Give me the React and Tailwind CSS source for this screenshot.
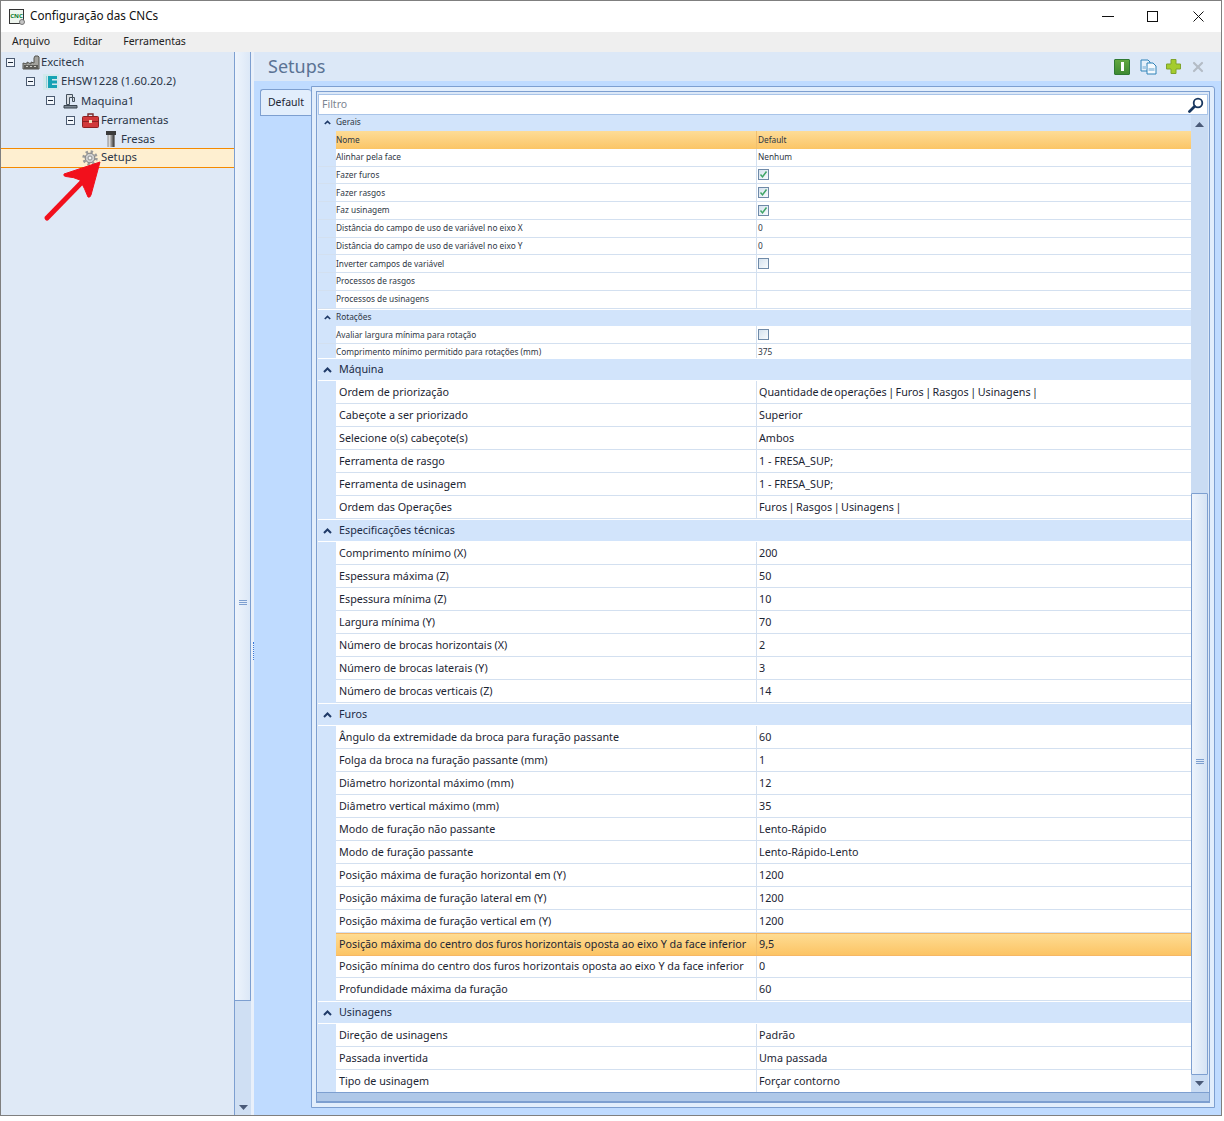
import { X } from "lucide-react";

const FONT = "[font-family:'Noto_Sans',sans-serif]";

const GERAIS = [
  ["Alinhar pela face", "Nenhum"],
  ["Fazer furos", "check"],
  ["Fazer rasgos", "check"],
  ["Faz usinagem", "check"],
  ["Distância do campo de uso de variável no eixo X", "0"],
  ["Distância do campo de uso de variável no eixo Y", "0"],
  ["Inverter campos de variável", "empty"],
  ["Processos de rasgos", ""],
  ["Processos de usinagens", ""],
];

const SECTIONS = [
  {
    title: "Máquina",
    rows: [
      ["Ordem de priorização", "Quantidade de operações | Furos | Rasgos | Usinagens |"],
      ["Cabeçote a ser priorizado", "Superior"],
      ["Selecione o(s) cabeçote(s)", "Ambos"],
      ["Ferramenta de rasgo", "1 - FRESA_SUP;"],
      ["Ferramenta de usinagem", "1 - FRESA_SUP;"],
      ["Ordem das Operações", "Furos | Rasgos | Usinagens |"],
    ],
  },
  {
    title: "Especificações técnicas",
    rows: [
      ["Comprimento mínimo (X)", "200"],
      ["Espessura máxima (Z)", "50"],
      ["Espessura mínima (Z)", "10"],
      ["Largura mínima (Y)", "70"],
      ["Número de brocas horizontais (X)", "2"],
      ["Número de brocas laterais (Y)", "3"],
      ["Número de brocas verticais (Z)", "14"],
    ],
  },
  {
    title: "Furos",
    rows: [
      ["Ângulo da extremidade da broca para furação passante", "60"],
      ["Folga da broca na furação passante (mm)", "1"],
      ["Diâmetro horizontal máximo (mm)", "12"],
      ["Diâmetro vertical máximo (mm)", "35"],
      ["Modo de furação não passante", "Lento-Rápido"],
      ["Modo de furação passante", "Lento-Rápido-Lento"],
      ["Posição máxima de furação horizontal em (Y)", "1200"],
      ["Posição máxima de furação lateral em (Y)", "1200"],
      ["Posição máxima de furação vertical em (Y)", "1200"],
      ["Posição máxima do centro dos furos horizontais oposta ao eixo Y da face inferior", "9,5", "active"],
      ["Posição mínima do centro dos furos horizontais oposta ao eixo Y da face inferior", "0", "short"],
      ["Profundidade máxima da furação", "60"],
    ],
  },
  {
    title: "Usinagens",
    rows: [
      ["Direção de usinagens", "Padrão"],
      ["Passada invertida", "Uma passada"],
      ["Tipo de usinagem", "Forçar contorno"],
    ],
  },
];

function Expander() {
  return (
    <span className="flex h-[9px] w-[9px] shrink-0 items-center justify-center border border-[#4b5a70] bg-[#f3f7fc]">
      <span className="h-px w-[5px] bg-[#1f2a3a]" />
    </span>
  );
}

function FactoryIcon() {
  return (
    <svg width="18" height="16" viewBox="0 0 18 16">
      <path d="M1 14V8l4 1V7l4 2V7l3 1V3l1-2h3l1 1v12z" fill="#a3a39e" stroke="#55554f" />
      <path d="M2 10h14v4H2z" fill="#5c5c58" />
      <path d="M4 11h2v1H4zM8 11h2v1H8zM12 11h2v1h-2z" fill="#d0d0c8" />
    </svg>
  );
}

function EIcon() {
  return (
    <svg width="16" height="16" viewBox="0 0 16 16">
      <rect width="16" height="16" fill="#d3e9ec" />
      <path d="M5 2h9v3H9v1.500h5v3H9V11h5v3H5z" fill="#16a3b4" />
      <path d="M3 2h1v12H3z" fill="#8fd3da" />
    </svg>
  );
}

function MachineIcon() {
  return (
    <svg width="15" height="16" viewBox="0 0 15 16" className="-ml-[2px]">
      <path d="M3.500 1.500h6v3h2v4h-2v-4h-3v7h-3z" fill="#d8dde2" stroke="#44505c" />
      <path d="M1 12.500h13v2.500H1z" fill="#7c8894" stroke="#3a444e" />
    </svg>
  );
}

function ToolboxIcon() {
  return (
    <svg width="17" height="15" viewBox="0 0 17 15" className="-ml-px">
      <path d="M6 3V1h5v2" fill="none" stroke="#7b2a2a" strokeWidth="1.400" />
      <rect x="0.500" y="3.500" width="16" height="11" rx="1" fill="#d1393b" stroke="#8f2022" />
      <path d="M1 8h15v1H1z" fill="#8f2022" />
      <rect x="7" y="7" width="3" height="3" fill="#f1e0c0" />
    </svg>
  );
}

function MillIcon() {
  return (
    <svg width="10" height="16" viewBox="0 0 10 16" className="-ml-px">
      <rect x="0" y="0" width="10" height="4" fill="#3b3b3b" />
      <rect x="1.500" y="4" width="7" height="12" fill="#8d8d8d" />
      <rect x="2.500" y="4" width="2" height="12" fill="#d8d8d8" />
      <rect x="6.500" y="4" width="2" height="12" fill="#4c4c4c" />
    </svg>
  );
}

function GearIcon() {
  return (
    <svg width="16" height="16" viewBox="0 0 16 16" className="-ml-[2px]">
      <circle cx="8" cy="8" r="6.400" fill="none" stroke="#9a9a9a" strokeWidth="2.600" strokeDasharray="2.400 2.600" />
      <circle cx="8" cy="8" r="4.800" fill="#cfcfcf" stroke="#808080" />
      <circle cx="8" cy="8" r="2" fill="#f4f4f4" stroke="#909090" />
    </svg>
  );
}

function TreeRow({ level, expander, icon, label, selected }) {
  return (
    <div
      className={`flex items-center text-[11.300px] text-[#2b3648] ${
        selected ? "-mt-px h-[20px] border-y border-[#f48a00] bg-[#feefd0]" : "h-[19.200px]"
      }`}
    >
      <span className="flex w-[14px] shrink-0 justify-end" style={{ marginLeft: level * 20 }}>
        {expander && <Expander />}
      </span>
      <span className="ml-[6px] flex w-[20px] shrink-0 justify-center">{icon}</span>
      <span className="whitespace-nowrap">{label}</span>
    </div>
  );
}

function Chevron({ small }) {
  return (
    <svg width={small ? 7 : 9} height={small ? 5 : 6} viewBox="0 0 9 6" className="shrink-0">
      <path d="M1 5l3.500-3.500L8 5" fill="none" stroke="#1f3a68" strokeWidth="2" />
    </svg>
  );
}

function CheckBox({ checked }) {
  return (
    <span className="flex h-[11px] w-[11px] items-center justify-center border border-[#6f8aa8] bg-gradient-to-br from-[#d5e2ee] to-[#f8fbfd]">
      {checked && (
        <svg width="9" height="9" viewBox="0 0 9 9">
          <path d="M1.500 4.500l2 2.400L7.500 1.500" fill="none" stroke="#3fa566" strokeWidth="1.500" />
        </svg>
      )}
    </span>
  );
}

function SmallRow({ name, value, header }) {
  return (
    <div
      className={`flex h-[17.750px] items-center text-[8.300px] text-[#2f3745] ${
        header
          ? "bg-gradient-to-b from-[#fddc96] to-[#fbc566]"
          : "border-b border-[#d3e0f0] bg-white"
      }`}
    >
      <span className="h-full w-[18px] shrink-0 bg-[#d2e4fb]" />
      <span className="w-[420px] shrink-0 pt-[0.500px]">{name}</span>
      <span className={`flex h-full flex-1 items-center pl-px ${header ? "border-l border-[#f0c070]" : "border-l border-[#d3e0f0]"}`}>
        {value === "check" ? <CheckBox checked /> : value === "empty" ? <CheckBox /> : value}
      </span>
    </div>
  );
}

function SmallGroup({ title, first }) {
  return (
    <div
      className={`flex items-center bg-[#d2e4fb] text-[8.300px] text-[#2f3745] ${
        first ? "h-[16px] pb-[2px]" : "h-[17.750px] border-t border-white pb-px"
      }`}
    >
      <span className="flex w-[18px] shrink-0 justify-center">
        <Chevron small />
      </span>
      <span>{title}</span>
    </div>
  );
}

function BigRow({ name, value, flag }) {
  const active = flag === "active";
  return (
    <div
      className={`flex items-center text-[10.750px] text-[#1c2533] ${flag === "short" ? "h-[22px]" : "h-[23px]"} ${
        active
          ? "border-y border-[#f6b765] bg-gradient-to-b from-[#fedc92] to-[#fcc464]"
          : "border-b border-[#d3e0f0] bg-white"
      }`}
    >
      <span className="h-[23px] w-[18px] shrink-0 bg-[#d2e4fb]" />
      <span className="w-[420px] shrink-0 whitespace-nowrap pl-[3px]">{name}</span>
      <span
        className={`flex h-full flex-1 items-center pl-[2px] ${active ? "border-l border-[#f0c070]" : "border-l border-[#d3e0f0]"} ${
          value.includes("|") ? "[word-spacing:-1.300px]" : ""
        }`}
      >
        {value}
      </span>
    </div>
  );
}

function BigGroup({ title }) {
  return (
    <div className="flex h-[23px] items-center border-y border-white bg-[#d2e4fb] text-[10.750px] text-[#1c2b45]">
      <span className="flex w-[18px] shrink-0 justify-center">
        <Chevron />
      </span>
      <span className="pl-[3px]">{title}</span>
    </div>
  );
}

function ArrowUp({ down }) {
  return (
    <svg width="9" height="5" viewBox="0 0 9 5" className={down ? "rotate-180" : ""}>
      <path d="M4.500 0L9 5H0z" fill="#4a5a78" />
    </svg>
  );
}

function Grip() {
  return (
    <span className="flex flex-col gap-[1px]">
      <span className="h-px w-[8px] bg-[#7d9fd0]" />
      <span className="h-px w-[8px] bg-[#7d9fd0]" />
      <span className="h-px w-[8px] bg-[#7d9fd0]" />
    </span>
  );
}

function Toolbar() {
  return (
    <div className="flex items-center gap-[9px] pr-[15px]">
      <span className="mr-px flex h-[16px] w-[16px] items-center justify-center rounded-[1px] border border-[#2f7a33] bg-gradient-to-b from-[#62a83f] to-[#3f8a32]">
        <span className="h-[9px] w-[3px] bg-white" />
      </span>
      <svg width="17" height="16" viewBox="0 0 17 16">
        <path d="M1 1h7l2 2v9H1z" fill="#e6f1fa" stroke="#2f82b8" />
        <path d="M7 4h6l3 3v8H7z" fill="#f4f9fd" stroke="#2f82b8" />
        <path d="M2.500 7h4v3h-4zM8.500 9h6v3h-6z" fill="#a9cde6" />
      </svg>
      <svg width="15" height="15" viewBox="0 0 15 15">
        <path d="M5 0.500h5v4.500h4.500v5H10v4.500H5V10H0.500V5H5z" fill="#a4cc2e" stroke="#7fa42c" />
      </svg>
      <X size={16} strokeWidth={3.2} className="text-[#b4bcc6]" />
    </div>
  );
}

export default function App() {
  return (
    <div className={`relative h-[1121px] w-[1224px] overflow-hidden bg-white ${FONT}`}>
      <div className="flex h-[1116px] w-[1222px] flex-col border border-[#7f7f7f]">
        {/* title bar */}
        <div className="flex h-[31px] shrink-0 items-center bg-white pb-px pl-[8px] text-[11.700px] text-[#111111]">
          <span className="relative flex h-[15px] w-[15px] items-center justify-center border border-[#333333] bg-[#eef5ee] text-[6px] font-bold leading-none text-[#0a7a2a]">
            CNC
            <span className="absolute -bottom-[2px] -right-[2px] h-[6px] w-[6px] rounded-full border border-[#777777] bg-[#c4c4c4]" />
          </span>
          <span className="ml-[6px]">Configuração das CNCs</span>
          <div className="ml-auto flex items-center gap-[33px] pr-[17px]">
            <svg width="12" height="12" viewBox="0 0 12 12">
              <path d="M0 6.500h12" stroke="#111111" />
            </svg>
            <svg width="11" height="11" viewBox="0 0 11 11" className="mr-[2px]">
              <rect x="0.500" y="0.500" width="10" height="10" fill="none" stroke="#111111" />
            </svg>
            <svg width="11" height="11" viewBox="0 0 11 11">
              <path d="M0.500 0.500l10 10M10.500 0.500l-10 10" stroke="#111111" />
            </svg>
          </div>
        </div>
        {/* menu */}
        <div className="flex h-[20px] shrink-0 items-center bg-[#efefef] pl-[11px] text-[10.500px] text-[#222222]">
          <span>Arquivo</span>
          <span className="ml-[23px]">Editar</span>
          <span className="ml-[21px]">Ferramentas</span>
        </div>

        <div className="flex min-h-0 flex-1">
          {/* tree */}
          <div className="w-[233px] shrink-0 bg-[#dfe9f6] pt-px">
            <TreeRow level={0} expander icon={<FactoryIcon />} label="Excitech" />
            <TreeRow level={1} expander icon={<EIcon />} label="EHSW1228 (1.60.20.2)" />
            <TreeRow level={2} expander icon={<MachineIcon />} label="Maquina1" />
            <TreeRow level={3} expander icon={<ToolboxIcon />} label="Ferramentas" />
            <TreeRow level={4} icon={<MillIcon />} label="Fresas" />
            <TreeRow level={3} icon={<GearIcon />} label="Setups" selected />
          </div>
          {/* tree scrollbar */}
          <div className="flex w-[17px] shrink-0 flex-col border-l border-[#7d9fd0] bg-[#cfdff3]">
            <div className="flex h-[949px] w-[16px] justify-center border-b border-r border-[#7d9fd0] bg-gradient-to-r from-[#eef4fc] to-[#dce8f7] pt-[548px]">
              <Grip />
            </div>
            <div className="mt-auto flex h-[16px] items-center justify-center">
              <ArrowUp down />
            </div>
          </div>
          {/* splitter */}
          <div className="flex w-[3px] shrink-0 items-start justify-end bg-[#e9f0fa] pt-[590px]">
            <span className="h-[18px] w-px border-l border-dotted border-[#3b78d8]" />
          </div>

          {/* content */}
          <div className="flex min-w-0 flex-1 flex-col bg-[#bfdbff]">
            <div className="flex h-[29px] shrink-0 items-center justify-between bg-[#dce8f7] pl-[14px]">
              <span className="text-[18px] text-[#5b7394]">Setups</span>
              <Toolbar />
            </div>
            <div className="flex min-h-0 flex-1 pb-[7px] pl-[6px] pr-[6px] pt-[5px]">
              <div className="mt-[3px] flex h-[27px] w-[51px] shrink-0 items-center justify-center rounded-t-[3px] border border-r-0 border-[#7d9fd0] bg-[#e2eefc] text-[10.500px] text-[#1c2533]">
                Default
              </div>
              <div className="flex min-w-0 flex-1 flex-col rounded-tr-[3px] border border-[#7d9fd0] bg-[#e2eefc] p-[4px]">
                <div className="flex min-h-0 flex-1 flex-col border border-[#7d9fd0] bg-[#dce8f7] px-px pt-px">
                  <div className="mt-px flex h-[21px] shrink-0 items-center border border-[#a9c4e8] bg-white pl-[3px] pr-[3px] pt-px text-[10.500px] text-[#7b8591]">
                    <span>Filtro</span>
                    <svg width="16" height="16" viewBox="0 0 16 16" className="ml-auto">
                      <circle cx="10" cy="6" r="4.300" fill="none" stroke="#17365f" strokeWidth="1.800" />
                      <path d="M6.500 9.500L1.500 14.500" stroke="#17365f" strokeWidth="2.800" strokeLinecap="round" />
                    </svg>
                  </div>
                  <div className="flex min-h-0 flex-1">
                    {/* property grid */}
                    <div className="min-w-0 flex-1 overflow-hidden">
                      <SmallGroup first title="Gerais" />
                      <SmallRow header name="Nome" value="Default" />
                      {GERAIS.map(([name, value]) => (
                        <SmallRow key={name} name={name} value={value} />
                      ))}
                      <SmallGroup title="Rotações" />
                      <SmallRow name="Avaliar largura mínima para rotação" value="empty" />
                      <div className="flex h-[14px] text-[8.300px] text-[#2f3745]">
                        <span className="w-[18px] shrink-0 bg-[#d2e4fb]" />
                        <span className="w-[420px] shrink-0 bg-white pt-[1px] leading-[13px]">Comprimento mínimo permitido para rotações (mm)</span>
                        <span className="flex-1 border-l border-[#d3e0f0] bg-white pl-px pt-[1px] leading-[13px]">375</span>
                      </div>
                      {SECTIONS.map((section) => (
                        <div key={section.title}>
                          <BigGroup title={section.title} />
                          {section.rows.map(([name, value, flag]) => (
                            <BigRow key={name} name={name} value={value} flag={flag} />
                          ))}
                        </div>
                      ))}
                    </div>
                    {/* grid scrollbar */}
                    <div className="flex w-[17px] shrink-0 flex-col bg-[#cadcf3]">
                      <div className="flex h-[18px] items-center justify-center">
                        <ArrowUp />
                      </div>
                      <div className="mt-[360px] flex flex-1 justify-center rounded-[1px] border border-[#7d9fd0] bg-gradient-to-r from-[#eef4fc] to-[#d5e3f4] pt-[265px]">
                        <Grip />
                      </div>
                      <div className="flex h-[17px] items-center justify-center">
                        <ArrowUp down />
                      </div>
                    </div>
                  </div>
                  {/* horizontal bar */}
                  <div className="-mx-px h-[10px] shrink-0 border-y border-[#7d9fd0] bg-[#afc8e8]" />
                </div>
              </div>
            </div>
          </div>
        </div>
      </div>

      {/* annotation arrow */}
      <svg width="70" height="70" viewBox="0 0 70 70" className="absolute left-[38px] top-[158px]">
        <path d="M9 60L46 22" stroke="#f2101c" strokeWidth="5" strokeLinecap="round" fill="none" />
        <path
          d="M62 4L26 16Q25 18 28 18.500Q36 19 42 22Q47 31 50 39Q52 40 53 37Z"
          fill="#f2101c"
          stroke="#f2101c"
          strokeWidth="1"
          strokeLinejoin="round"
        />
      </svg>
    </div>
  );
}
